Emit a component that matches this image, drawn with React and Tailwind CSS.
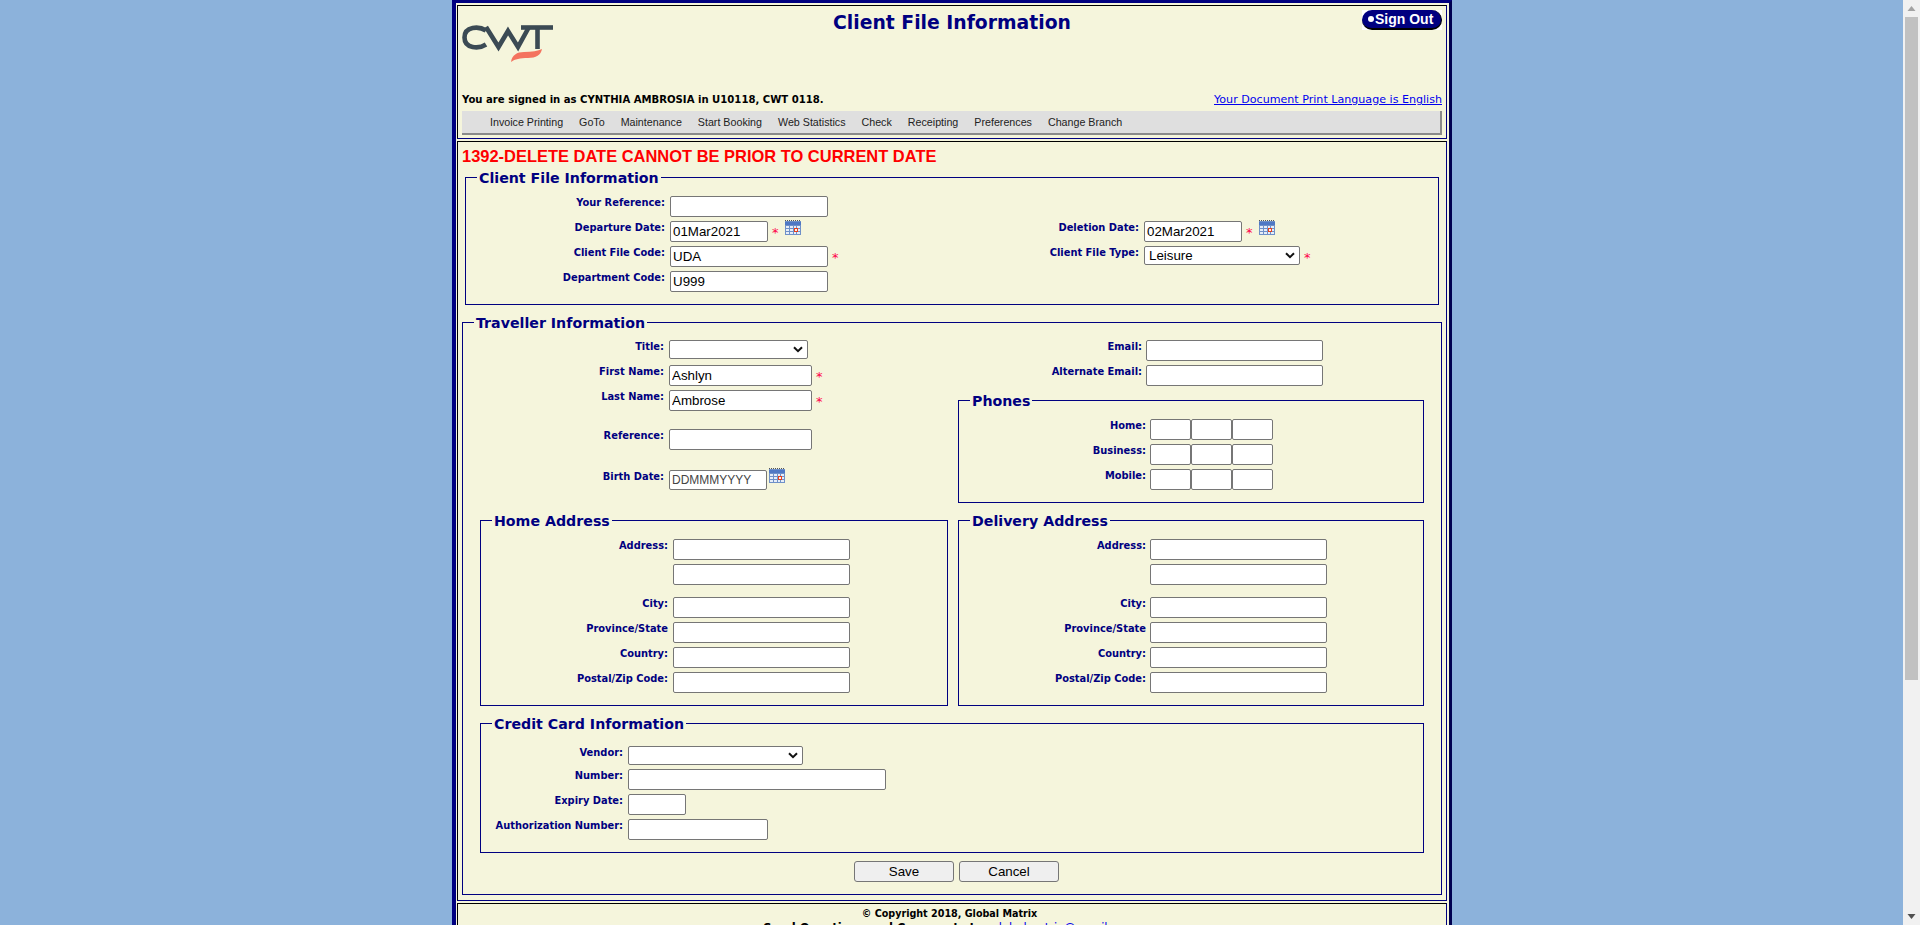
import React from "react";

const inputBase = "block h-[21px] border border-[#767676] rounded-[2px] bg-white pl-[2px] pr-0 text-[13.33px] text-black font-['Liberation_Sans',sans-serif] outline-none";
const selectBase = "block h-[19px] border border-[#767676] rounded-[2px] bg-white pl-[4px] text-[13.33px] text-black font-['Liberation_Sans',sans-serif] outline-none relative";

function Inp({ w, v, h }) {
  return <input readOnly defaultValue={v || ""} className={`${inputBase} ${w} ${h || ""}`} />;
}

function Select({ w, v }) {
  return (
    <div className={`${selectBase} ${w} flex items-center`}>
      <span>{v}</span>
      <svg width="10" height="7" viewBox="0 0 10 7" className="absolute right-[4px] top-[5px]">
        <path d="M1 1.2 L5 5.2 L9 1.2" fill="none" stroke="#111" strokeWidth="2" />
      </svg>
    </div>
  );
}

function Star() {
  return <span className="block w-[6px] h-[19px] ml-[4px] text-[13px] leading-[23px] text-[#ff0048] font-['DejaVu_Sans',sans-serif]">*</span>;
}

function Cal({ cls }) {
  return (
    <svg width="16" height="15" viewBox="0 0 16 15" className={cls}>
      <rect x="0" y="1" width="16" height="14" fill="#6f90c8" />
      <path d="M0 0.5 H16" stroke="#555" strokeDasharray="1 1" />
      <rect x="0" y="2" width="16" height="3" fill="#4f78c4" />
      <g fill="#e6edf8">
        <rect x="1" y="6" width="3" height="2" /><rect x="5" y="6" width="3" height="2" /><rect x="9" y="6" width="2" height="2" /><rect x="12" y="6" width="3" height="2" />
        <rect x="1" y="9" width="3" height="2" /><rect x="5" y="9" width="3" height="2" /><rect x="12" y="9" width="3" height="2" />
        <rect x="1" y="12" width="3" height="2" /><rect x="5" y="12" width="3" height="2" /><rect x="9" y="12" width="2" height="2" /><rect x="12" y="12" width="3" height="2" />
      </g>
      <rect x="9.5" y="8.5" width="3" height="3" fill="#f4f4f4" stroke="#e8401c" />
    </svg>
  );
}

function Field({ label, lab, children, cls }) {
  return (
    <div className={`flex items-start ${cls || ""}`}>
      <label className={`block shrink-0 pt-[1px] text-right text-[9.9px] leading-[12px] font-bold text-[#000080] font-['DejaVu_Sans',sans-serif] ${lab}`}>{label}</label>
      {children}
    </div>
  );
}

function Box({ title, cls, children }) {
  return (
    <fieldset className={`border border-[#000080] ${cls}`}>
      <legend className="ml-[11px] px-[2px] h-[16px] text-[14.2px] leading-[18px] font-bold text-[#000080] font-['DejaVu_Sans',sans-serif]">{title}</legend>
      {children}
    </fieldset>
  );
}

function Logo() {
  return (
    <svg width="92" height="38" viewBox="0 0 92 38" className="block">
      <g fill="none" stroke="#3b4a54" strokeWidth="4.6">
        <path d="M24 5.5 C 17 1, 2.5 1, 2.5 12.5 C 2.5 24, 17 24, 24 19.5" />
        <path d="M24 2 L36.5 22 L46 6 L56 22 L67 2" />
        <path d="M59 2.5 L91 2.5" />
        <path d="M75.5 2 L75.5 24" />
      </g>
      <path d="M49 37 C 50 30, 55 27, 62 27 C 70 27, 76 26, 80 24 C 79 30, 74 33, 66 33 C 58 33, 53 34, 49 37 Z" fill="#f4735f" />
    </svg>
  );
}

function AddressBox({ title, cls, lab }) {
  return (
    <Box title={title} cls={cls}>
      <div className="pt-[11px] pb-[12px] flex flex-col gap-[4px]">
        <Field label="Address:" lab={lab}><Inp w="w-[177px]" /></Field>
        <Field label="" lab={lab} cls="mb-[8px]"><Inp w="w-[177px]" /></Field>
        <Field label="City:" lab={lab}><Inp w="w-[177px]" /></Field>
        <Field label="Province/State" lab={lab}><Inp w="w-[177px]" /></Field>
        <Field label="Country:" lab={lab}><Inp w="w-[177px]" /></Field>
        <Field label="Postal/Zip Code:" lab={lab}><Inp w="w-[177px]" /></Field>
      </div>
    </Box>
  );
}

const menu = ["Invoice Printing", "GoTo", "Maintenance", "Start Booking", "Web Statistics", "Check", "Receipting", "Preferences", "Change Branch"];

export default function App() {
  const lab1 = "w-[199px] mr-[5px]";
  const labT = "w-[201px] mr-[5px]";
  return (
    <div className="h-[925px] flex overflow-hidden bg-[#8cb2db]">
      <div className="flex-1 min-w-0">
        <div className="ml-[452px] w-[1000px] border-t-[3px] border-l-[4px] border-r-[3px] border-t-[#000080] border-l-[#000080] border-r-[#000050] bg-[#f5f5dc] pl-[1px] pr-[2px] pt-[2px]">
          {/* Header panel */}
          <div className="border border-t-black border-l-black border-r-[#000080] border-b-[#000080] bg-[#f5f5dc] h-[134px] flex flex-col">
            <div className="grid grid-cols-3 h-[85px] px-[4px]">
              <div className="pt-[19px]"><Logo /></div>
              <div className="text-center pt-[5px] text-[18.8px] leading-[24px] font-bold text-[#000080] font-['DejaVu_Sans',sans-serif] whitespace-nowrap">Client File Information</div>
              <div className="flex justify-end pt-[4px]">
                <div className="w-[80px] h-[20px] bg-white">
                  <div className="h-[20px] rounded-full bg-[#000080] border-b-[2px] border-r border-black flex items-center pl-[6px] text-white text-[14px] font-bold font-['Liberation_Sans',sans-serif] leading-none">
                    <span className="block w-[6px] h-[6px] rounded-full bg-white mr-[1px]"></span>Sign Out
                  </div>
                </div>
              </div>
            </div>
            <div className="flex justify-between items-end h-[16px] px-[4px]">
              <span className="text-[10.1px] leading-[14px] font-bold text-black font-['DejaVu_Sans',sans-serif]">You are signed in as CYNTHIA AMBROSIA in U10118, CWT 0118.</span>
              <a className="text-[11.1px] leading-[14px] text-[#0000ee] underline font-['DejaVu_Sans',sans-serif]">Your Document Print Language is English</a>
            </div>
            <div className="mx-[4px] mt-[4px] h-[24px] bg-[#dfdfdf] border-r-[2px] border-b-[2px] border-[#8a8a8a] flex items-center gap-[16px] pl-[28px] text-[10.7px] text-[#222] font-['Liberation_Sans',sans-serif]">
              {menu.map((m) => <span key={m}>{m}</span>)}
            </div>
          </div>

          {/* Main panel */}
          <div className="mt-[2px] border border-t-black border-l-black border-r-[#000080] border-b-[#000080] bg-[#f5f5dc] h-[760px]">
            <div className="h-[27px] pl-[4px] text-[16.47px] leading-[29px] font-bold text-[#ff0000] font-['Liberation_Sans',sans-serif]">1392-DELETE DATE CANNOT BE PRIOR TO CURRENT DATE</div>

            <Box title="Client File Information" cls="ml-[7px] mr-[7px]">
              <div className="flex pt-[11px] pb-[12px]">
                <div className="w-[474px] flex flex-col gap-[4px]">
                  <Field label="Your Reference:" lab={lab1}><Inp w="w-[158px]" /></Field>
                  <Field label="Departure Date:" lab={lab1}><Inp w="w-[98px]" v="01Mar2021" /><Star /><Cal cls="ml-[7px] -mt-[1px]" /></Field>
                  <Field label="Client File Code:" lab={lab1}><Inp w="w-[158px]" v="UDA" /><Star /></Field>
                  <Field label="Department Code:" lab={lab1}><Inp w="w-[158px]" v="U999" /></Field>
                </div>
                <div className="flex-1 flex flex-col gap-[4px] pt-[25px]">
                  <Field label="Deletion Date:" lab="w-[199px] mr-[5px]"><Inp w="w-[98px]" v="02Mar2021" /><Star /><Cal cls="ml-[7px] -mt-[1px]" /></Field>
                  <Field label="Client File Type:" lab="w-[199px] mr-[5px]"><Select w="w-[156px]" v="Leisure" /><Star /></Field>
                </div>
              </div>
            </Box>

            <Box title="Traveller Information" cls="mt-[9px] mx-[4px]">
              <div className="flex pt-[10px]">
                <div className="w-[495px]">
                  <Field label="Title:" lab={labT} cls="h-[25px]"><Select w="w-[139px]" /></Field>
                  <Field label="First Name:" lab={labT} cls="mb-[4px]"><Inp w="w-[143px]" v="Ashlyn" /><Star /></Field>
                  <Field label="Last Name:" lab={labT} cls="mb-[18px]"><Inp w="w-[143px]" v="Ambrose" /><Star /></Field>
                  <Field label="Reference:" lab={labT} cls="mb-[20px]"><Inp w="w-[143px]" /></Field>
                  <Field label="Birth Date:" lab={labT}><Inp w="w-[98px]" h="!h-[20px] !text-[12px] !text-[#444]" v="DDMMMYYYY" /><Cal cls="ml-[2px] -mt-[2px]" /></Field>
                </div>
                <div className="w-[466px]">
                  <Field label="Email:" lab="w-[184px] mr-[4px]" cls="mb-[4px]"><Inp w="w-[177px]" /></Field>
                  <Field label="Alternate Email:" lab="w-[184px] mr-[4px]"><Inp w="w-[177px]" /></Field>
                  <Box title="Phones" cls="mt-[6px]">
                    <div className="pt-[11px] pb-[12px] flex flex-col gap-[4px]">
                      {["Home:", "Business:", "Mobile:"].map((l) => (
                        <Field key={l} label={l} lab="w-[187px] mr-[4px]">
                          <Inp w="w-[41px]" /><Inp w="w-[41px]" /><Inp w="w-[41px]" />
                        </Field>
                      ))}
                    </div>
                  </Box>
                </div>
              </div>

              <div className="flex mt-[9px] ml-[17px] gap-[10px]">
                <AddressBox title="Home Address" cls="w-[468px]" lab="w-[187px] mr-[5px]" />
                <AddressBox title="Delivery Address" cls="w-[466px]" lab="w-[187px] mr-[4px]" />
              </div>

              <Box title="Credit Card Information" cls="mt-[9px] ml-[17px] mr-[17px]">
                <div className="pt-[15px] pb-[12px] flex flex-col">
                  <Field label="Vendor:" lab="w-[142px] mr-[5px]" cls="h-[23px]"><Select w="w-[175px]" /></Field>
                  <Field label="Number:" lab="w-[142px] mr-[5px]" cls="mb-[4px]"><Inp w="w-[258px]" /></Field>
                  <Field label="Expiry Date:" lab="w-[142px] mr-[5px]" cls="mb-[4px]"><Inp w="w-[58px]" /></Field>
                  <Field label="Authorization Number:" lab="w-[142px] mr-[5px]"><Inp w="w-[140px]" /></Field>
                </div>
              </Box>

              <div className="flex justify-center gap-[5px] pt-[8px] pb-[12px] pl-[9px]">
                <button className="w-[100px] h-[21px] bg-[#efefef] border border-[#767676] rounded-[3px] text-[13.33px] text-black font-['Liberation_Sans',sans-serif]">Save</button>
                <button className="w-[100px] h-[21px] bg-[#efefef] border border-[#767676] rounded-[3px] text-[13.33px] text-black font-['Liberation_Sans',sans-serif]">Cancel</button>
              </div>
            </Box>
          </div>

          {/* Footer panel */}
          <div className="mt-[2px] border border-t-black border-l-black border-r-[#000080] border-b-[#000080] bg-[#f5f5dc] h-[60px] text-center text-[9.6px] leading-[12px] font-bold text-black font-['DejaVu_Sans',sans-serif] pt-[4px] pr-[5px]">
            <div>© Copyright 2018, Global Matrix</div>
            <div className="text-[11.5px] mt-[2px]">Send Questions and Comments to: <a className="font-normal text-[#0000ee] underline">globalmatrix@gmail.com</a></div>
          </div>
        </div>
      </div>

      {/* Scrollbar */}
      <div className="w-[17px] h-[925px] bg-[#f1f1f1] flex flex-col items-center shrink-0">
        <svg width="17" height="17" viewBox="0 0 17 17" className="block shrink-0"><path d="M8.5 6 L12.5 11 L4.5 11 Z" fill="#a3a3a3" /></svg>
        <div className="w-[13px] h-[663px] bg-[#c1c1c1]"></div>
        <div className="flex-1"></div>
        <svg width="17" height="17" viewBox="0 0 17 17" className="block shrink-0"><path d="M8.5 11 L12.5 6 L4.5 6 Z" fill="#505050" /></svg>
      </div>
    </div>
  );
}
